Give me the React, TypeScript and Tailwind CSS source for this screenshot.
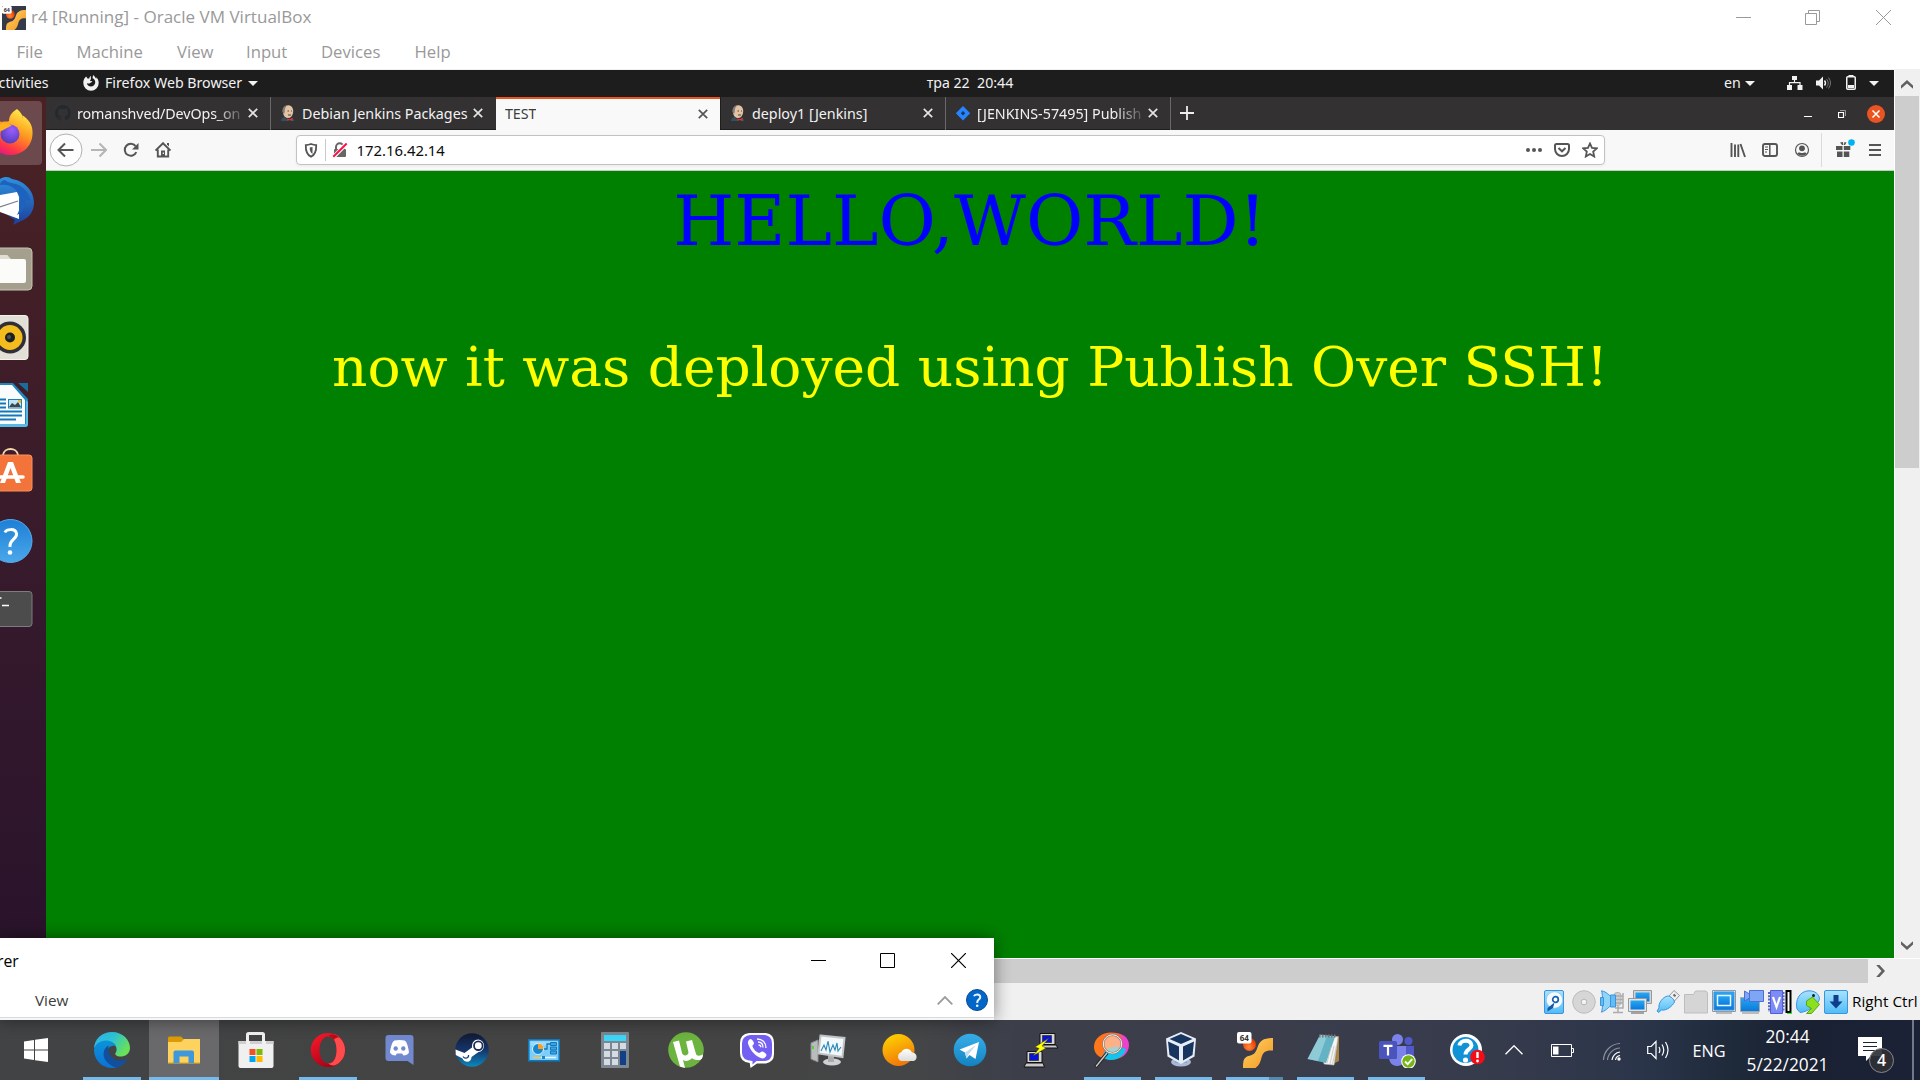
import type { ReactNode } from "react";

const WIN = "font-['Open_Sans',sans-serif]";
const UBU = "font-['Noto_Sans',sans-serif]";

function Icon({ w, h, className = "", children }: { w: number; h: number; className?: string; children: ReactNode }) {
  return (
    <svg width={w} height={h} viewBox={`0 0 ${w} ${h}`} fill="none" className={`block shrink-0 ${className}`}>
      {children}
    </svg>
  );
}

function Machine64({ size }: { size: number }) {
  return (
    <svg width={size} height={size} viewBox="0 0 36 36" className="block shrink-0">
      <defs>
        <linearGradient id="m64" x1="0" y1="0" x2="1" y2="1">
          <stop offset="0" stopColor="#ffd56a" />
          <stop offset="1" stopColor="#f4941c" />
        </linearGradient>
        <radialGradient id="m64b" cx=".45" cy=".7" r=".6">
          <stop offset="0" stopColor="#ff8a3a" />
          <stop offset="1" stopColor="#e93a00" />
        </radialGradient>
      </defs>
      <circle cx="12.500" cy="12.500" r="6.500" fill="url(#m64b)" />
      <path d="M36 6v12.500c-8-.5-10 2-11.500 7-1 4-2 7.500-6 10.500H6c0-8 1-10.500 5.500-12 6-1 7.500-4 9.500-10 2-5 5-8 15-8z" fill="url(#m64)" />
      <rect x="0" y="0" width="14.500" height="11.500" rx="2" fill="#fff" />
      <text x="7.300" y="8.800" textAnchor="middle" fontSize="8" fontWeight="700" fill="#333" fontFamily="Noto Sans">64</text>
    </svg>
  );
}

/* ---------- VirtualBox window frame ---------- */

function VmTitleBar() {
  return (
    <div className="flex h-[35px] items-center bg-white">
      <div className="ml-[2px] flex h-6 w-6 items-center justify-center bg-[#343a47]">
        <Machine64 size={24} />
      </div>
      <span className={`${WIN} mt-[-1px] ml-[5px] text-[17.050px] leading-none text-[#999]`}>r4 [Running] - Oracle VM VirtualBox</span>
      <div className="ml-auto flex items-center">
        <Icon w={15} h={15} className="mr-[54px]"><path d="M0 7.500h15" stroke="#999" /></Icon>
        <Icon w={15} h={15} className="mr-[56px]"><path d="M.5 3.500h11v11H.5zM3.500 3.500v-3h11v11h-3" stroke="#999" /></Icon>
        <Icon w={15} h={15} className="mr-[29px]"><path d="M0 0l15 15M15 0L0 15" stroke="#999" /></Icon>
      </div>
    </div>
  );
}

function VmMenu() {
  return (
    <div className={`${WIN} flex h-[34px] items-center bg-white pl-[16.500px] text-[16.700px] leading-none text-[#999]`}>
      <span className="w-[60px]">File</span>
      <span className="w-[100.500px]">Machine</span>
      <span className="w-[69px]">View</span>
      <span className="w-[75px]">Input</span>
      <span className="w-[93.500px]">Devices</span>
      <span>Help</span>
    </div>
  );
}

/* ---------- GNOME panel ---------- */

const Caret = ({ className = "" }) => (
  <Icon w={10} h={5} className={className}><path d="M0 0h10L5 5z" fill="#f2f2f2" /></Icon>
);

function GnomePanel() {
  return (
    <div className={`${UBU} flex h-[27px] items-center bg-[#1d1d1d] text-[14.200px] leading-none text-[#f2f2f2]`}>
      <div className="flex w-[620px] items-center">
        <span className="ml-[-10.500px] w-[93.500px]">Activities</span>
        <Icon w={16} h={16} className="-mt-px">
          <path d="M8 .8C6.800 1.600 6.300 2.600 6.400 3.600L4.500 3.400 3.200 1.600C1.300 3.200.3 5.200.3 8a7.700 7.700 0 0 0 15.400 0c0-2.500-1-4.700-2.600-5.800l.3 1.800C12.300 2 11 1.200 10.800 0 9.800.7 9.400 2 9.700 3.200c1.900.9 2.800 2.700 2.500 4.600-.4 2.300-2 3.800-4.200 3.800-2.300 0-4-1.600-4.100-3.600 1 .8 2.200.8 3.300 0 1-.8 1.700-.8 2.200-1.300-.3-.6-1.200-.8-2.200-.6C7 5.200 7 4.700 8 4.200 8 3 7.700 2 8 .8z" fill="#f2f2f2" />
        </Icon>
        <span className="ml-[6px]">Firefox Web Browser</span>
        <Caret className="ml-[6px]" />
      </div>
      <div className="w-[700px] text-center whitespace-pre">тра 22  20:44</div>
      <div className="flex flex-1 items-center">
        <span className="ml-[404px]">en</span>
        <Caret className="ml-[4px]" />
        <Icon w={16} h={14} className="ml-[32px] -mt-px">
          <path d="M5 0h5v4H5zM0 9h5v5H0zM10.500 9h5v5h-5z" fill="#f2f2f2" />
          <path d="M7.500 4v3M2.500 9V6.700h10.500V9" stroke="#f2f2f2" strokeWidth="1.200" />
        </Icon>
        <Icon w={16} h={14} className="ml-[13px]">
          <path d="M0 4.500h3L7 .5v13l-4-4H0z" fill="#f2f2f2" />
          <path d="M8.500 4.500q2 2.500 0 5" stroke="#f2f2f2" strokeWidth="1.400" />
          <path d="M10.500 3q3.500 4 0 8.500M12.500 1.500q4 5.500 0 11" stroke="#777" />
        </Icon>
        <Icon w={10} h={15} className="ml-[14px] -mt-[2px]">
          <rect x=".75" y="1.750" width="8.500" height="12.500" rx="1" stroke="#f2f2f2" strokeWidth="1.500" />
          <path d="M2.500 0h5v1.500h-5zM2 10h6v3H2z" fill="#f2f2f2" />
        </Icon>
        <Caret className="ml-[13px]" />
      </div>
    </div>
  );
}

/* ---------- Ubuntu dock ---------- */

function DockItem({ active, children }: { active?: boolean; children: ReactNode }) {
  return (
    <div className={`h-16 w-[42px] ${active ? "rounded-r-[4px] bg-[#6b494c]" : ""}`}>
      <Icon w={42} h={64}>{children}</Icon>
    </div>
  );
}

function Dock() {
  return (
    <div className="flex w-[46px] shrink-0 flex-col gap-1 bg-linear-to-b from-[#4a2223] via-[#35192c] via-60% to-[#29132b] pt-1">
      <DockItem active>
        <defs>
          <linearGradient id="ff" x1=".8" y1="0" x2=".3" y2="1">
            <stop offset="0" stopColor="#fff44f" />
            <stop offset=".45" stopColor="#ff9a1e" />
            <stop offset=".8" stopColor="#ff3647" />
            <stop offset="1" stopColor="#e31587" />
          </linearGradient>
          <radialGradient id="ffb" cx=".6" cy=".3" r=".8">
            <stop offset="0" stopColor="#9a5cff" />
            <stop offset="1" stopColor="#4a3ab0" />
          </radialGradient>
        </defs>
        <path d="M17 8c4 3 6 7 6 10 0-2 0-3-1-4 8 5 11 11 10.500 19C32 46 22 54 10 54 0 54-8 48-12 36c0-8 3-15 8-19l5 4c5-1 7 0 8-1 0-5 3-9 8-12z" fill="url(#ff)" />
        <circle cx="10" cy="33" r="9.500" fill="url(#ffb)" />
        <path d="M0 23c5-2 9-1 12 2-3 0-4 2-7 3-2 1-3 2-5 2z" fill="#ffb01f" />
      </DockItem>
      <DockItem>
        <defs>
          <linearGradient id="tb" x1="0" y1="0" x2="0" y2="1">
            <stop offset="0" stopColor="#2f90dd" />
            <stop offset="1" stopColor="#1c3f9c" />
          </linearGradient>
        </defs>
        <path d="M0 10c5-3 9-2 12 0 12 2 22 11 22 24 0 9-6 16-13 18l-8 4 2-5-15-10z" fill="url(#tb)" />
        <path d="M0 26l17-3 2 5v22L0 43z" fill="#fff" />
        <path d="M0 38l18-6" stroke="#7a7f88" strokeWidth="1.200" />
        <path d="M5 11c-3 0-5 3-5 5 10-1 16 3 20 12 1 7 0 12-3 18 6-3 9-9 9-15 2 0 3 1 4 2 1-5-4-15-14-18-4-1-8-1-11-4z" fill="#1d62bd" />
      </DockItem>
      <DockItem>
        <rect x="-10" y="11" width="42" height="42" rx="4" fill="#a59f8d" stroke="#c6c2b4" />
        <path d="M-5 18H7l3 4h14q2 0 2 2v20q0 2-2 2H-5z" fill="#fbfbf9" />
        <path d="M0 18h7l4 4H0z" fill="#e0ddd2" />
      </DockItem>
      <DockItem>
        <rect x="-14" y="10.500" width="42" height="44" rx="3" fill="#e2dfd7" stroke="#f4f2ec" />
        <circle cx="10" cy="32.500" r="16" fill="#2f2e39" />
        <circle cx="10" cy="32.500" r="12.500" fill="#f3bd1d" />
        <circle cx="10" cy="32.500" r="5" fill="#1d2022" />
        <circle cx="9" cy="32" r="2" fill="#4b5257" />
      </DockItem>
      <DockItem>
        <path d="M0 10h13l15 16v25q0 3-3 3H0z" fill="#1d86bd" />
        <path d="M0 12h12l13 15v24H0z" fill="#fbfcfd" />
        <path d="M0 54v-3h26V27l2 2v22q0 3-3 3z" fill="#56b9e6" />
        <path d="M18 10h10v9z" fill="#1b6c9c" />
        <path d="M0 26.500h6M0 30.500h6M0 34.500h6M0 38.500h22M0 42.500h22M0 46.500h16" stroke="#1478b8" strokeWidth="1.800" />
        <rect x="8.500" y="26.500" width="13" height="8.500" fill="#bfe6f7" stroke="#1d80ba" />
        <path d="M9 34l3-4 3 2 3-3 3 5z" fill="#444" />
        <path d="M18 27h3v3q-3 0-3-3z" fill="#f4b80e" />
      </DockItem>
      <DockItem>
        <path d="M3 14c1-8 14-8 15 0" stroke="#f5d7ae" strokeWidth="1.800" />
        <rect x="-10" y="14" width="42" height="36" rx="3" fill="#f3743a" stroke="#f9915d" />
        <path d="M8 21h5l8 21h-5L10.500 27 5 42H0z" fill="#fff" />
        <path d="M0 36h23" stroke="#fff" strokeWidth="3.500" strokeLinecap="round" />
      </DockItem>
      <DockItem>
        <defs>
          <linearGradient id="hp" x1="0" y1="0" x2="0" y2="1">
            <stop offset="0" stopColor="#1d7fd6" />
            <stop offset="1" stopColor="#4aa8ea" />
          </linearGradient>
        </defs>
        <circle cx="10.500" cy="32" r="21.500" fill="url(#hp)" stroke="#56acec" />
        <path d="M5 23.500c1-3 10-5 11.500 1 1 5-6.500 6-6.500 12v1.500" stroke="#fff" strokeWidth="3" />
        <circle cx="10" cy="43.500" r="2.300" fill="#fff" />
      </DockItem>
      <DockItem>
        <rect x="-10" y="14.500" width="42" height="35" rx="3" fill="#4c4c4c" stroke="#7d7d7d" />
        <path d="M2 28.500h7M0 21h1.500" stroke="#fff" strokeWidth="1.500" />
      </DockItem>
    </div>
  );
}

/* ---------- Firefox ---------- */

const TabClose = ({ dark = false }) => (
  <Icon w={10} h={10} className={dark ? "text-[#555]" : "text-[#e4e4e4]"}>
    <path d="M.8.8l8.400 8.400M9.200.8L.8 9.200" stroke="currentColor" strokeWidth="1.700" />
  </Icon>
);

const Jenkins = () => (
  <Icon w={16} h={16}>
    <path d="M3 8C2 3 5 0 8.500.2 12 .5 14 4 13 8c-.5 3-2.500 5-5 5S3.500 11 3 8z" fill="#e3c3a4" />
    <path d="M3 8C1.500 4 4 .5 7.500.3 5.500 2 4.500 4 4.800 7L4 9z" fill="#837c78" />
    <path d="M1 16c0-2.500 2-4 4-4l3 3v1zM12.500 12.500l2 3.500H10z" fill="#335061" />
    <path d="M7 13.300l2.500 1 3-1.600v3l-3-.7-2 1z" fill="#d33833" />
    <path d="M7.500 6h1.500M11 6h1M8 10h3" stroke="#55423a" />
  </Icon>
);

function Tab({ icon, label, fade, active, sep, labelClass }: { icon?: ReactNode; label: string; fade?: boolean; active?: boolean; sep?: boolean; labelClass?: string }) {
  return (
    <div
      className={`flex h-[33px] shrink-0 items-center ${
        active ? "w-[224px] border-t-2 border-[#e95420] bg-[#f9f9f9] pb-[2px] pl-[9px] text-[#3d3d3d]" : "w-[225px] border-b border-[#1f1e1f] pl-[9px] text-[#f2f2f2]"
      }`}
    >
      {icon && <div className="mr-[6px] shrink-0">{icon}</div>}
      <span
        className={`min-w-0 overflow-hidden whitespace-nowrap ${labelClass ?? "tracking-[-0.120px]"} ${
          fade ? "w-[164px] mask-r-from-84% mask-r-to-104%" : ""
        } pt-[6px] pb-1`}
      >
        {label}
      </span>
      <div className={`ml-auto ${active || sep ? "mr-[12px]" : "mr-[13px]"}`}><TabClose dark={active} /></div>
      {sep && <div className="h-[33px] w-px bg-[#6a696a]" />}
    </div>
  );
}

function TabStrip() {
  return (
    <div className={`${UBU} flex h-[33px] items-center bg-[#333132] text-[14.300px] leading-none`}>
      <Tab
        label="romanshved/DevOps_on"
        fade
        sep
        icon={
          <Icon w={16} h={16}>
            <path d="M8 0a8 8 0 0 0-2.500 15.600c.4.100.5-.2.500-.4v-1.500c-2.200.5-2.700-1-2.700-1-.4-.9-.9-1.200-.9-1.200-.7-.5.1-.5.1-.5.800.1 1.200.8 1.200.8.7 1.200 1.900.9 2.300.7.1-.5.300-.9.500-1.100-1.800-.2-3.600-.9-3.600-4 0-.9.300-1.600.8-2.100-.1-.2-.4-1 .1-2.100 0 0 .7-.2 2.200.8a7.500 7.500 0 0 1 4 0c1.500-1 2.200-.8 2.200-.8.4 1.100.2 1.900.1 2.100.5.6.8 1.300.8 2.100 0 3.100-1.900 3.700-3.700 3.900.3.300.600.8.600 1.500v2.200c0 .2.100.5.500.4A8 8 0 0 0 8 0z" fill="#24292e" />
          </Icon>
        }
      />
      <Tab label="Debian Jenkins Packages" labelClass="tracking-[-0.020px]" icon={<Jenkins />} />
      <Tab label="TEST" active />
      <div className="h-full w-px bg-[#1f1e1f]" />
      <Tab label="deploy1 [Jenkins]" labelClass="" sep icon={<Jenkins />} />
      <Tab
        label="[JENKINS-57495] Publish"
        labelClass=""
        fade
        sep
        icon={
          <Icon w={16} h={16}>
            <path d="M8 1l7.200 7.200L8 15.400.8 8.200z" fill="#2684ff" />
            <path d="M8 6l2.200 2.200L8 10.400 5.800 8.200z" fill="#1d3557" />
          </Icon>
        }
      />
      <Icon w={14} h={14} className="-mt-px ml-[9px]"><path d="M7 0v14M0 7h14" stroke="#eee" strokeWidth="1.800" /></Icon>
      <div className="ml-auto flex items-center pr-[9px]">
        <Icon w={8} h={8} className="mr-[26px]"><path d="M0 6.500h8" stroke="#fff" /></Icon>
        <Icon w={8} h={8} className="mr-[21px]">
          <path d="M.5 2.500h5v5h-5z" stroke="#fff" strokeWidth="1.200" />
          <path d="M2 .5h5.500V6" stroke="#999" />
        </Icon>
        <Icon w={18} h={18}>
          <circle cx="9" cy="9" r="9" fill="#e95420" />
          <path d="M5.500 5.500l7 7m0-7l-7 7" stroke="#fff" strokeWidth="1.500" />
        </Icon>
      </div>
    </div>
  );
}

function Toolbar() {
  return (
    <div className="flex h-[41px] items-center border-b border-[#c8c8c8] bg-[#f8f8f8] text-[#555]">
      <Icon w={34} h={34} className="ml-[3px]">
        <circle cx="17" cy="17" r="16" fill="#fdfdfd" stroke="#b1b1b1" />
        <path d="M24.500 17H10M16 10.500L9.500 17l6.500 6.500" stroke="currentColor" strokeWidth="2" />
      </Icon>
      <Icon w={16} h={16} className="ml-[8px]">
        <path d="M0 8h14.500M8.500 1.500L15 8l-6.500 6.500" stroke="#b5b5b5" strokeWidth="2" />
      </Icon>
      <Icon w={16} h={16} className="ml-[16px]">
        <path d="M13.300 10.200A6 6 0 1 1 12.500 4" stroke="currentColor" strokeWidth="2" />
        <path d="M15.500 1v6.500H9z" fill="currentColor" />
      </Icon>
      <Icon w={16} h={16} className="ml-[16px]">
        <path d="M.5 8.500L8 1.200l7.500 7.300M2.800 7.500v7h10.400v-7" stroke="currentColor" strokeWidth="1.900" />
        <path d="M6 8.500h4V14H6z" fill="currentColor" />
        <path d="M12 1h2v3.500l-2-2z" fill="currentColor" />
        <path d="M8.300 10.500v1.500" stroke="#f8f8f8" strokeWidth="1.200" />
      </Icon>
      <div className="ml-[125px] flex h-[30px] w-[1309px] items-center rounded-[4px] border border-[#c2c2c2] bg-white shadow-[0_1px_3px_rgba(0,0,0,0.06)]">
        <Icon w={14} h={15} className="ml-[7px]">
          <path d="M7 1c2 .8 3.500 1.100 5.200 1.200C12.400 8 11.500 11.500 7 13.800 2.500 11.500 1.600 8 1.800 2.200 3.500 2.100 5 1.800 7 1z" stroke="currentColor" strokeWidth="1.800" />
          <path d="M7 4v7C4.800 9.500 4.200 7.500 4.200 4.500z" fill="currentColor" transform="translate(1.500 0)" />
        </Icon>
        <div className="ml-[7px] h-[22px] w-px bg-[#c9c9c9]" />
        <Icon w={16} h={16} className="ml-[6px]">
          <path d="M4 7V5a3.700 3.700 0 0 1 7.400 0v2" stroke="#666" strokeWidth="2" />
          <rect x="2" y="7" width="12" height="8" rx="1" fill="#666" />
          <path d="M1 15.500L14.500 1.500" stroke="#fff" strokeWidth="4" />
          <path d="M1.300 14.800L14.700 1.500" stroke="#ff0f45" strokeWidth="2" />
        </Icon>
        <span className={`${UBU} ml-[8.500px] pt-px text-[14.850px] leading-none text-[#0c0c0d]`}>172.16.42.14</span>
        <div className="ml-auto flex items-center pr-[6px]">
          <Icon w={16} h={4} className="mr-[12px]">
            <circle cx="2" cy="2" r="2" fill="currentColor" /><circle cx="8" cy="2" r="2" fill="currentColor" /><circle cx="14" cy="2" r="2" fill="currentColor" />
          </Icon>
          <Icon w={16} h={16} className="mr-[12px]">
            <path d="M2.500 2h11q1.500 0 1.500 1.500V7a7 7 0 0 1-14 0V3.500Q1 2 2.500 2z" stroke="currentColor" strokeWidth="2" />
            <path d="M4.500 6L8 9.300 11.500 6" stroke="currentColor" strokeWidth="2" />
          </Icon>
          <Icon w={16} h={16}>
            <path d="M8 1.500l2 4.400 4.800.5-3.600 3.200 1 4.900L8 12l-4.200 2.500 1-4.900L1.200 6.400 6 5.900z" stroke="currentColor" strokeWidth="1.800" />
          </Icon>
        </div>
      </div>
      <div className="ml-auto flex items-center">
        <Icon w={16} h={16} className="mr-[16px]">
          <path d="M1.500 1v14M5 2.500V15M8.300 2.500V15M10.500 2l4.500 13" stroke="currentColor" strokeWidth="1.900" />
        </Icon>
        <Icon w={16} h={16} className="mr-[16px]">
          <rect x="1" y="2" width="14" height="12" rx="2" stroke="currentColor" strokeWidth="1.900" />
          <path d="M7.800 2v12" stroke="currentColor" strokeWidth="1.500" /><path d="M3 5h3M3 7.500h3M3 10h2" stroke="currentColor" />
        </Icon>
        <Icon w={16} h={16} className="mr-[11px]">
          <circle cx="8" cy="8" r="6.500" stroke="currentColor" strokeWidth="1.200" />
          <circle cx="8" cy="6.300" r="2.900" fill="currentColor" />
          <path d="M3.200 11.500C5 9.500 6 11 8 11s3-1.500 4.800.5C11.500 13 10 13.700 8 13.700s-3.500-.7-4.800-2.200z" fill="currentColor" />
        </Icon>
        <div className="mr-[14px] h-[34px] w-px bg-[#dadada]" />
        <Icon w={19} h={18} className="mr-[14px] -mt-[4px]">
          <path d="M0 7h6.500v4H0zM7.800 7h6.500v4H7.800zM1 12.500h5.500V18H1zM7.800 12.500h5.500V18H7.800zM4 3.500l3-.5.300 3H6zM10.500 3.500l-2-.5-.7 3H9z" fill="currentColor" />
          <circle cx="15.500" cy="3.500" r="3.300" fill="#00b3f4" />
        </Icon>
        <Icon w={12} h={12} className="mr-[13px]"><path d="M0 1h12M0 6h12M0 11h12" stroke="currentColor" strokeWidth="1.900" /></Icon>
      </div>
    </div>
  );
}

function Page() {
  return (
    <div className="flex flex-1 flex-col items-center bg-[#008000] pt-[10px] font-['DejaVu_Serif',serif] whitespace-nowrap">
      <div className="text-[70px] leading-[80px] text-[#00f]">HELLO,WORLD!</div>
      <div className="mt-[74px] text-[55px] leading-[64px] text-[#ff0]">now it was deployed using Publish Over SSH!</div>
    </div>
  );
}

/* ---------- VM scroll bars and status bar ---------- */

function VScroll() {
  return (
    <div className="flex w-[25px] shrink-0 flex-col items-center bg-[#f0f0f0] pr-px">
      <Icon w={12} h={9} className="mt-[10px] mb-[7px]"><path d="M0 5.500L6 0l6 5.500v3.300L6 3.500 0 8.800z" fill="#606060" /></Icon>
      <div className="h-[372px] w-full bg-[#cdcdcd]" />
      <Icon w={12} h={9} className="mt-auto mb-[8px]"><path d="M0 3.500L6 9l6-5.500V.2L6 5.500 0 .2z" fill="#606060" /></Icon>
    </div>
  );
}

const frame = "#3d93dd";

function StatusIcons() {
  return (
    <div className="flex items-center gap-1">
      <Icon w={24} h={24}>
        <defs>
          <linearGradient id="sb" x1="0" y1="0" x2="0" y2="1"><stop offset="0" stopColor="#a8e2ff" /><stop offset="1" stopColor="#4fbdf6" /></linearGradient>
          <linearGradient id="sc" x1="0" y1="0" x2="0" y2="1"><stop offset="0" stopColor="#2aa7f2" /><stop offset="1" stopColor="#0879dd" /></linearGradient>
        </defs>
        <rect x=".5" y=".5" width="19" height="23" rx="1.500" fill="url(#sb)" stroke={frame} />
        <circle cx="10.500" cy="10" r="8.300" fill="#f2faff" stroke="#88bde8" strokeWidth=".7" />
        <circle cx="11.500" cy="9.500" r="2.800" fill="#fff" stroke="#1c5fae" strokeWidth="1.700" />
        <path d="M10.500 12.500l-1.500 5.500-5.500 3.500v-3.500z" fill="#1559a8" />
      </Icon>
      <Icon w={24} h={24}>
        <circle cx="12" cy="12" r="11.300" fill="#d6d6d6" stroke="#bcbcbc" />
        <circle cx="12" cy="12" r="2.800" fill="#f4f4f4" stroke="#b5b5b5" />
      </Icon>
      <Icon w={24} h={24}>
        <rect x="14" y="2.500" width="7" height="13" rx="3" fill="#cfcfcf" stroke="#b4b4b4" />
        <path d="M15 6h8M15 9.500h8M15 13h8M18 16v6M13 22.500h10M23 3v15h-8" stroke="#ababab" strokeWidth="1.500" />
        <path d="M1.500.8C7 2 8.500 5 10.500 6v10c-2 1-3.500 4-9 6.200C3 18 3 5 1.500.8z" fill="#8fd5f8" stroke={frame} />
        <path d="M10.500 5h5v12h-5zM.5 7.500h3v8h-3z" fill="#62bdf2" stroke={frame} />
      </Icon>
      <Icon w={24} h={24}>
        <path d="M5.500.5h18v13h-18z" fill="#d4d4d4" stroke="#999" /><path d="M7.500 2.500h14v9h-14z" fill="url(#sc)" />
        <path d="M.5 8.500h18v13H.5z" fill="#e4e4e4" stroke="#999" /><path d="M2.500 10.500h14v9h-14z" fill="url(#sc)" /><path d="M3 23h13" stroke="#888" strokeWidth="1.500" />
      </Icon>
      <Icon w={24} h={24}>
        <path d="M13 6l5-5.500 5.500 5-5 5.500z" fill="#eee" stroke="#999" /><path d="M17.500 4.500l2 1.800" stroke="#666" strokeWidth="2" />
        <path d="M11.500 6c3 0 6.500 3 7 6-2 4-8 9-13 8l-3 2.500L1 21l2-3C2 13 7 7 11.500 6z" fill="url(#sb)" stroke={frame} />
      </Icon>
      <Icon w={24} h={24}>
        <path d="M.5 4.500h9l2-3.500h10.500l1.500 2v20H.5z" fill="#d5d5d5" stroke="#bdbdbd" />
      </Icon>
      <Icon w={24} h={24}>
        <path d="M.5.5h23v21H.5z" fill="#e6e6e6" stroke="#8b9aa8" /><path d="M2 2h20v18H2z" fill="url(#sc)" stroke={frame} /><path d="M5.500 5.500h13v10h-13z" fill="url(#sc)" stroke="#e8f7ff" strokeWidth="1.500" /><path d="M4 23h16" stroke="#aaa" strokeWidth="1.500" />
      </Icon>
      <Icon w={24} h={24}>
        <path d="M.5 7.500h19v14H.5z" fill="url(#sc)" stroke="#aaa" /><path d="M2 23h17" stroke="#aaa" strokeWidth="1.500" />
        <path d="M9.500.5h14v11h-14zM9.500 4l-5-3v10l5-3z" fill="#7fa5f5" stroke="#4b6fd6" />
      </Icon>
      <Icon w={24} h={24}>
        <path d="M1 2v20M15.500 2v20" stroke="#5b66c8" strokeWidth="2" strokeDasharray="2 1.300" />
        <path d="M2.500.5h12v23h-12z" fill="#7d8cf5" stroke="#4f5fd0" />
        <path d="M5 7l3.500 10L12 7" stroke="#fff" strokeWidth="2.200" />
        <path d="M18.500 1h4v21h-4z" fill="#fff" stroke="#000" strokeWidth="2" /><path d="M19 23.500h5V21" stroke="#1bff1b" />
      </Icon>
      <Icon w={24} h={24}>
        <path d="M1 19C-1 11 3 1 13 .8c6 0 10 3 10.500 8C23 14 12 22 4 22.500z" fill="url(#sb)" stroke={frame} />
        <circle cx="17.500" cy="5.500" r="1.500" fill="#123" />
        <path d="M10.500 11l6-4 7 7.500-8 9h-5l5-5-5-3z" fill="#8be01f" stroke="#5aa70f" />
      </Icon>
      <Icon w={24} h={24}>
        <rect x=".5" y=".5" width="23" height="23" rx="1.500" fill="url(#sb)" stroke={frame} />
        <path d="M9.500 5h5v6.500h4L12 18.500 5.500 11.500h4z" fill="#0f3e8c" />
      </Icon>
    </div>
  );
}

/* ---------- Explorer window ---------- */

function ExplorerWindow() {
  return (
    <div className={`${WIN} absolute bottom-[60px] left-0 flex h-[82px] w-[994px] flex-col bg-white shadow-[0_0_16px_rgba(0,0,0,0.45)]`}>
      <div className="flex h-[45px] items-center leading-none">
        <span className="ml-[-3px] pt-[3px] text-[15.800px] text-black">rer</span>
        <div className="ml-auto flex items-center">
          <Icon w={15} h={15} className="mr-[54px]"><path d="M0 7.500h15" stroke="#000" /></Icon>
          <Icon w={15} h={15} className="mr-[56px]"><path d="M.5.5h14v14H.5z" stroke="#000" /></Icon>
          <Icon w={15} h={15} className="mr-[28px]"><path d="M0 0l15 15M15 0L0 15" stroke="#000" strokeWidth="1.200" /></Icon>
        </div>
      </div>
      <div className="flex h-[34px] items-center">
        <span className="mt-[2px] ml-[35px] text-[15.300px] leading-none text-[#3b3b3b]">View</span>
        <div className="ml-auto flex items-center">
          <Icon w={16} h={9} className="mr-[13px]"><path d="M.7 8.300L8 1l7.300 7.300" stroke="#9c9c9c" strokeWidth="1.800" /></Icon>
          <Icon w={22} h={22} className="mr-[6px]">
            <circle cx="11" cy="11" r="10.500" fill="#0067c8" stroke="#0b4d92" />
            <path d="M8 7.300c.8-2.500 6-2.700 6.300.7.2 2.300-3 2.800-3 5v1" stroke="#e8f2fc" strokeWidth="2" />
            <circle cx="11.200" cy="16.800" r="1.300" fill="#e8f2fc" />
          </Icon>
        </div>
      </div>
      <div className="h-px bg-[#d9dadb]" />
      <div className="flex-1 bg-[#f5f6f7]" />
    </div>
  );
}

/* ---------- Windows taskbar ---------- */

function Task({ running, active, stacked, wide, children }: { running?: boolean; active?: boolean; stacked?: boolean; wide?: boolean; children: ReactNode }) {
  return (
    <div className={`flex h-[60px] shrink-0 flex-col items-center ${wide ? "w-[72px]" : "w-[71px]"}`}>
      <div className={`flex h-[57px] items-center justify-center pt-[3px] ${active ? "w-[70px] bg-[#69696b]" : ""}`}>{children}</div>
      {active && <div className="h-[3px] w-[70px] bg-[#76b9ed]" />}
      {running && (
        <div className={`flex h-[3px] bg-[#76b9ed] ${wide ? "w-[58px]" : "w-[57px]"}`}>{stacked && <div className="ml-auto w-[14px] bg-[#5587af]" />}</div>
      )}
    </div>
  );
}

function Taskbar() {
  return (
    <div className={`${WIN} relative flex h-[60px] bg-[linear-gradient(90deg,#424344_0%,#444_40%,#434547_48%,#3c3e4a_53%,#3b3d4a_65%,#363b4c_78%,#2a3449_86%,#1f2a3b_90%,#192133_94%,#1b2236_100%)] text-white`}>
      <div className="flex w-[72px] items-center justify-center">
        <Icon w={24} h={24}><path d="M0 3.400L10 2v9.500H0zM11 1.800L24 0v11.500H11zM0 12.500h10V22L0 20.600zM11 12.500h13V24l-13-1.800z" fill="#fff" /></Icon>
      </div>
      <div className="ml-[4px] flex">
        <Task running wide>
          <Icon w={36} h={36}>
            <defs>
              <linearGradient id="e1" x1="0" y1="0" x2="1" y2=".5"><stop offset="0" stopColor="#2fb3f0" /><stop offset=".5" stopColor="#2cc3d6" /><stop offset="1" stopColor="#68e05a" /></linearGradient>
              <linearGradient id="e2" x1="0" y1="0" x2="0" y2="1"><stop offset="0" stopColor="#0c93d8" /><stop offset="1" stopColor="#0b72d8" /></linearGradient>
            </defs>
            <path d="M0 17C0 7 8 0 18 0c11 0 18 8 18 16 0 6-5 8.500-9.500 8.500-4 0-6-2-5-3.500 3-4 0-11-8.500-11C6 10 1.500 13 0 17z" fill="url(#e1)" />
            <path d="M0 18c1-6 6-9.500 12-9.500 5 0 9 2.500 10 5.500-6-1.500-10 3-8 9 2 7 10 10 17 7C28 33.500 23 36 18 36 8 36 0 28 0 18z" fill="url(#e2)" />
            <path d="M14.500 13.500C8 17 8 26 14 31c4 3.500 8 5 10 4.200 4-1.400 8-5 9.500-8-.5-.5-3 1.500-8 1.300-7-.3-12-6-11-15z" fill="#124f9c" />
          </Icon>
        </Task>
        <Task active wide>
          <Icon w={32} h={28}>
            <path d="M0 2q0-1.500 1.500-1.500H13L15.500 3H32v9H0z" fill="#dc9b05" />
            <path d="M0 6h13l3-3h16v24H0z" fill="#fdd25f" /><path d="M0 26h32v1.500H0z" fill="#f2bc35" />
            <path d="M7.500 14.500H24q2 0 2 2V27h-5.500v-6.500h-9V27H5.500V16.500q0-2 2-2z" fill="#3f97dc" />
          </Icon>
        </Task>
        <Task wide>
          <Icon w={36} h={36}>
            <path d="M9.500 11V2.500q0-1 1-1h14q1 0 1 1V11" stroke="#f1f1f1" strokeWidth="3" />
            <path d="M.5 9h35v25q0 2-2 2h-31q-2 0-2-2z" fill="#f0f0f0" /><path d="M.5 9H8v3H.500zM28 9h7.500v3H28zM12 9h12v3H12z" fill="#cfcfcf" />
            <path d="M11.500 17h6v6h-6z" fill="#f25022" /><path d="M18.500 17h6v6h-6z" fill="#7fba00" /><path d="M11.500 24h6v6h-6z" fill="#00a4ef" /><path d="M18.500 24h6v6h-6z" fill="#ffb900" />
          </Icon>
        </Task>
        <Task running wide>
          <Icon w={36} h={36}>
            <defs><linearGradient id="op" x1="0" y1="0" x2=".6" y2="1"><stop offset="0" stopColor="#ff1b2d" /><stop offset="1" stopColor="#a70014" /></linearGradient></defs>
            <path fillRule="evenodd" d="M18 1a17.300 17 0 1 0 .1 0zM18 4.500c5 0 8.500 6 8.500 13.500S23 31.500 18 31.500 9.500 25.500 9.500 18 13 4.500 18 4.500z" fill="url(#op)" />
            <path d="M18 4.500c4-3.500 9-2.500 12 1.500 7 7 6.500 18 0 24-4 4-8 4.500-12 1.500 6 0 8.500-6 8.500-13.500S24 4.500 18 4.500z" fill="#ff4b4b" />
            <path d="M18 4.500c3-3.500 8-3 12 1.500-3-1-5 0-6 2-2-2.500-4-3.500-6-3.500z" fill="#b80d18" />
          </Icon>
        </Task>
        <Task wide>
          <Icon w={30} h={32}>
            <path d="M3.500 1h22q3 0 3 3v27l-6-4H3.500q-3 0-3-3V4q0-3 3-3z" fill="#7289d0" />
            <path d="M9.500 6.500c3-.8 7-.8 10 0 2 .5 4 6.500 4.500 12-1 2-3 3-5.500 3l-1.500-2h-5l-1.500 2c-2.500 0-4.500-1-5.500-3C5.500 13 7.500 7 9.500 6.500z" fill="#fff" />
            <circle cx="10.700" cy="14.500" r="2.200" fill="#7289d0" /><circle cx="18.300" cy="14.500" r="2.200" fill="#7289d0" />
          </Icon>
        </Task>
        <Task wide>
          <Icon w={34} h={34}>
            <defs><linearGradient id="st" x1="0" y1="0" x2="0" y2="1"><stop offset="0" stopColor="#111a32" /><stop offset=".5" stopColor="#15346a" /><stop offset="1" stopColor="#0b88bd" /></linearGradient></defs>
            <circle cx="17" cy="17" r="16.700" fill="url(#st)" />
            <path d="M.5 16.500l9 3.500L17 14.500c-.2-5 2-8 6.500-8a6.300 6.300 0 0 1 0 12.500l-7 5c0 6-7 6-9 1.500L.8 22z" fill="#fff" />
            <circle cx="23.300" cy="12.700" r="4.300" fill="#fff" stroke="#1c2f57" strokeWidth="1.800" />
            <path d="M8 23.500c2 3 6 1.500 5.500-1.500" stroke="#173c73" strokeWidth="1.200" />
          </Icon>
        </Task>
        <Task wide>
          <Icon w={32} h={24}>
            <rect x=".8" y="1.800" width="30.400" height="21" fill="#7ccdf7" stroke="#1177b8" strokeWidth="1.600" />
            <path d="M2.500 3.500h27v4h-27z" fill="#b5e5fc" opacity=".6" />
            <circle cx="10" cy="11" r="5.500" fill="#1787d2" stroke="#d8f2ff" /><path d="M10 11V5.500a5.500 5.500 0 0 1 5.500 5.500z" fill="#ff9d1e" />
            <path d="M16 11h3V6h3" stroke="#1477bb" strokeWidth="1.300" /><path d="M22.500 4.500h6v3h-6zM22.500 9h6v3h-6zM22.500 13h6v3h-6z" fill="#3aa5e6" stroke="#1477bb" />
            <path d="M5 19.500h8" stroke="#f4c657" strokeWidth="1.500" /><path d="M13 19.500h15" stroke="#e6f7ff" strokeWidth="1.500" /><path d="M14 18h3v3h-3z" fill="#1787d2" />
          </Icon>
        </Task>
        <Task>
          <Icon w={28} h={36} className="-translate-x-px">
            <rect x="0" y="0" width="28" height="36" rx="1" fill="#7c8792" />
            <path d="M3 3h22v6H3z" fill="#3cd6f8" />
            <path d="M3 11h6v6H3zM11 11h6v6h-6zM19 11h6v6h-6zM3 19h6v6H3zM11 19h6v6h-6zM3 27h6v6H3zM11 27h6v6h-6z" fill="#d5dbe3" />
            <path d="M19 19h6v14h-6z" fill="#123f86" />
          </Icon>
        </Task>
        <Task>
          <Icon w={36} h={36} className="-translate-x-px">
            <circle cx="18" cy="18" r="17.800" fill="#6cb33f" />
            <path d="M5 10l6-1.500 3 12.500c1 3.500 6 3 6.500-.5L18 9.500l6-1.500 4 14c.7 2 3 2 6 1l1-1c0 4-1.500 6-4 6-4 0-6-.5-7-2-2 2.500-6 4-9 2l2 8-5-1.500z" fill="#fff" />
          </Icon>
        </Task>
        <Task>
          <Icon w={36} h={36} className="-translate-x-px">
            <path d="M10 1h17q8 1 8 10v11q0 8-8 9.500H18L11.500 36l-.8-5Q1 30 1 21V11Q1 2 10 1z" fill="#fff" />
            <path d="M11 3h15q7 1 7 8.500v9.500q0 7-7 8h-8.500l-4 3.500V29Q3 28.500 3 21v-9.500Q3 4 11 3z" fill="#7360f2" />
            <path d="M11.500 7c1.500 0 3 2.500 3.500 4 .3 1.500-2 2-1.500 3.500 1.500 3.500 3.500 5.500 6.500 6.500 1.500 0 2-2 3.500-1.500s4 2 4 3.500c-.5 2-2.500 3.500-4 3.500C17 25 11 18.500 9 11.500c-.5-2 1-4 2.500-4.500z" fill="#fff" />
            <path d="M18 7c6 0 9 4 9 9M19 10c3.500 0 5 2.500 5 5.500M19.500 12.800c1.500 0 2.300 1 2.300 2.500" stroke="#fff" strokeWidth="1.300" />
          </Icon>
        </Task>
        <Task>
          <Icon w={36} h={32} className="-translate-x-px">
            <path d="M1 9l7-3v22l-7-3z" fill="#b9bcbd" stroke="#8a8c8d" /><path d="M2 12h2v3H2z" fill="#56d338" />
            <ellipse cx="22" cy="28" rx="9" ry="3.500" fill="#cfd1d2" /><path d="M18 20l6 1v7h-6z" fill="#aaadae" />
            <path d="M10.500 1.500l24 2.500-2 19-24-3.500z" fill="#f2f8fb" stroke="#c2c5c6" strokeWidth="2" />
            <path d="M11 17l3-6 2 5 2-9 2 11 3-7 2 5 2-7 1 8 3-4" stroke="#2d87b8" strokeWidth="1.100" />
          </Icon>
        </Task>
        <Task>
          <Icon w={36} h={34}>
            <defs>
              <linearGradient id="wx" x1=".2" y1="0" x2=".6" y2="1"><stop offset="0" stopColor="#ffd400" /><stop offset="1" stopColor="#f0730b" /></linearGradient>
              <linearGradient id="cl" x1="0" y1="0" x2="0" y2="1"><stop offset="0" stopColor="#fff" /><stop offset="1" stopColor="#dcdcdc" /></linearGradient>
            </defs>
            <circle cx="16.500" cy="17" r="16" fill="url(#wx)" />
            <path d="M19 28a4.800 4.800 0 0 1 .5-9c1-3.500 8-5.500 10.500.5 5-.5 6.500 7 1.500 8.500z" fill="url(#cl)" />
          </Icon>
        </Task>
        <Task>
          <Icon w={34} h={34} className="-translate-x-px">
            <defs><linearGradient id="tg" x1="0" y1="0" x2="0" y2="1"><stop offset="0" stopColor="#38aee8" /><stop offset="1" stopColor="#1283c2" /></linearGradient></defs>
            <circle cx="17" cy="17" r="16.300" fill="url(#tg)" />
            <path d="M6.500 16.500L26 9l-3.500 17-6-4-3 3.500-1.500-6z" fill="#fff" /><path d="M12 19.500L23 12l-7.500 9.500-2 4z" fill="#c3dcec" />
          </Icon>
        </Task>
        <Task>
          <Icon w={36} h={36} className="-translate-x-px">
            <path d="M17 1.500h15v11H17z" fill="#d6d6d6" stroke="#111" /><path d="M19.500 3.500h9v7h-9z" fill="#0713d8" stroke="#444" /><path d="M16 13h17l2 3H14z" fill="#c9c9c9" stroke="#111" />
            <path d="M4 19.500h15v11H4z" fill="#d6d6d6" stroke="#111" /><path d="M6.500 21.500h9v7h-9z" fill="#0713d8" stroke="#444" /><path d="M3 31h17l1.500 4H1z" fill="#c9c9c9" stroke="#111" />
            <path d="M26 6L12 15l4 1.500L10 24l13-8-4-2z" fill="#ff0" stroke="#333" strokeWidth=".5" />
          </Icon>
        </Task>
        <Task running>
          <Icon w={36} h={36} className="-translate-x-px">
            <defs><linearGradient id="pal" x1="0" y1="0" x2="1" y2="0"><stop offset="0" stopColor="#ff7a14" /><stop offset=".7" stopColor="#ff6a3a" /><stop offset=".85" stopColor="#ef3fd0" /></linearGradient></defs>
            <path d="M0 15C0 6 8 .5 17 .5c10 0 18 4 18 12.500 0 9-8 14.500-17 14.500C7 27.500 0 23 0 15z" fill="url(#pal)" />
            <path d="M9 23c3-9 14-10 23-6-1 6-8 11-15 11-4 0-7-1-8-5z" fill="#12c5ee" />
            <path d="M13 21L1.500 35" stroke="#222" strokeWidth="3.500" /><path d="M13 21L2 34.500" stroke="#c6c6c6" strokeWidth="1.500" />
            <circle cx="18.500" cy="12" r="9.200" fill="#ffdcc0" fillOpacity=".6" stroke="#8c7a74" strokeWidth="2.200" />
            <circle cx="18.500" cy="12" r="9.200" stroke="#f6f1ec" />
          </Icon>
        </Task>
        <Task running>
          <Icon w={32} h={36} className="-translate-x-[3px]">
            <ellipse cx="16" cy="30" rx="10" ry="4.500" fill="#a8bad6" /><path d="M10 25h12v6H10z" fill="#8fa5c8" />
            <path d="M16 0l15 6.500-1.500 18L16 32 2.500 24.500 1 6.500z" fill="#e6edf6" />
            <path d="M16 2l11.500 5L16 12 4.500 7zM3 9.500l11 5v14L4.500 23zM29 9.500l-11 5v14l9.500-5.500z" fill="#17355e" />
          </Icon>
        </Task>
        <Task running stacked>
          <Machine64 size={36} />
        </Task>
        <Task running>
          <Icon w={34} h={34} className="-translate-x-[2px]">
            <path d="M28 3h4v25l-6 3z" fill="#a88347" />
            <path d="M13 2l18 2-4 28-10-1z" fill="#f5f5f2" stroke="#bbb" strokeWidth=".6" />
            <path d="M13 2l15 2-9 26L.5 26z" fill="#63b3c5" /><path d="M13 2l7 1-9 25L.5 26z" fill="#b5dde5" opacity=".55" />
            <path d="M12 3h18" stroke="#777" strokeWidth="3" strokeDasharray="1.500 1.500" />
            <path d="M24 14l-4 16M27 13l-4 18M29.500 13l-4 18" stroke="#bbb" strokeWidth=".7" />
          </Icon>
        </Task>
        <Task running>
          <Icon w={38} h={36}>
            <circle cx="19.500" cy="7.500" r="5.500" fill="#7b83eb" /><circle cx="30.500" cy="9" r="4" fill="#5059c9" />
            <path d="M26 14h10v9c0 4-3 6-6 6z" fill="#5059c9" /><path d="M11 14h17v11c0 5-4 9-9 9s-8-4-8-9z" fill="#7b83eb" />
            <rect x="1" y="9" width="18" height="18" rx="1.500" fill="#4b53bc" />
            <path d="M5.500 13.800h9M10 14v9.500" stroke="#fff" strokeWidth="2.200" />
            <circle cx="30.500" cy="29.500" r="7.300" fill="#fff" /><circle cx="30.500" cy="29.500" r="6.200" fill="#76b516" />
            <path d="M27 29.500l2.700 2.700 4.500-5" stroke="#fff" strokeWidth="1.900" />
          </Icon>
        </Task>
        <Task>
          <Icon w={36} h={34} className="-translate-x-px">
            <circle cx="17" cy="17" r="16" fill="#fff" /><circle cx="16.500" cy="17" r="13" fill="#0f92d6" />
            <path d="M10.500 12.500c.5-6 12-6.500 12 0 0 4-6 4-6 9" stroke="#fff" strokeWidth="4" /><circle cx="16.500" cy="27" r="2.600" fill="#fff" />
            <circle cx="28.500" cy="24" r="7.300" fill="#f30d17" /><path d="M28.500 19v6" stroke="#fff" strokeWidth="2.400" /><circle cx="28.500" cy="28" r="1.400" fill="#fff" />
          </Icon>
        </Task>
      </div>
      <div className="ml-[2px] flex flex-1 items-center">
        <Icon w={18} h={10}><path d="M.5 9.300L9 .8l8.500 8.500" stroke="#fff" strokeWidth="1.400" /></Icon>
        <Icon w={24} h={14} className="mt-px ml-[28px]">
          <path d="M.5.5h20v12H.500zM21 4.500h1.500v4H21" stroke="#fff" /><path d="M2 2.500h5.500v8H2z" fill="#fff" />
        </Icon>
        <Icon w={20} h={20} className="mt-px ml-[27px]">
          <path d="M1.500 19A17 17 0 0 1 18 2.500M5.500 19A13 13 0 0 1 18 7" stroke="#8990a0" strokeWidth="1.200" />
          <path d="M10 19a9 9 0 0 1 8-8M13.500 19a5.500 5.500 0 0 1 4.500-4.500" stroke="#fff" strokeWidth="1.200" /><circle cx="17" cy="18" r="1.700" fill="#fff" />
        </Icon>
        <Icon w={24} h={20} className="ml-[25px]">
          <path d="M.7 6.500h3.500L9 1.500v17l-4.800-5H.700z" stroke="#fff" strokeWidth="1.200" />
          <path d="M12 7q1.800 3 0 6M15 4.500q3.500 5.500 0 11M18.500 2q5 8 0 16" stroke="#fff" strokeWidth="1.200" />
        </Icon>
        <span className="mt-[2px] ml-[21.500px] w-[53px] text-[16.300px] leading-none">ENG</span>
        <div className="mt-px w-[84px] text-center text-[17.300px] leading-[28px]">
          <div>20:44</div>
          <div>5/22/2021</div>
        </div>
        <Icon w={38} h={38} className="ml-[28px] mt-[9px]">
          <path d="M0 1h24v19H13l-5 5v-5H0z" fill="#fff" />
          <path d="M5 6.500h14M5 10.500h14M5 14.500h14" stroke="#1c2335" strokeWidth="1.200" />
          <circle cx="23.500" cy="24.500" r="12" fill="#2e3034" fillOpacity=".92" stroke="#85878b" />
          <text x="23.500" y="30" textAnchor="middle" fontSize="16" fontWeight="600" fill="#fff" fontFamily="Open Sans">4</text>
        </Icon>
        <div className="mr-[6px] ml-auto h-full w-[2px] bg-[#74798a]" />
      </div>
    </div>
  );
}

export default function App() {
  return (
    <div className="relative flex h-[1080px] w-[1920px] flex-col overflow-hidden bg-white">
      <VmTitleBar />
      <VmMenu />
      <div className="flex h-[889px] border-t border-[#f0f0f0]">
        <div className="flex w-[1894px] flex-col">
          <GnomePanel />
          <div className="flex min-h-0 flex-1">
            <Dock />
            <div className="flex min-w-0 flex-1 flex-col">
              <TabStrip />
              <Toolbar />
              <Page />
            </div>
          </div>
        </div>
        <div className="w-px bg-white" />
        <VScroll />
      </div>
      <div className="flex h-[25px] items-center border-t border-white bg-[#f0f0f0]">
        <div className="h-full w-[1868px] bg-[#cdcdcd]" />
        <Icon w={9} h={12} className="ml-[8px]"><path d="M3.500 0L9 6l-5.500 6H.2l5.300-6L.2 0z" fill="#606060" /></Icon>
      </div>
      <div className="flex h-[37px] items-center justify-end bg-[#f0f0f0]">
        <StatusIcons />
        <span className={`${WIN} mr-[2px] ml-[4px] w-[66px] text-[15.300px] leading-none whitespace-nowrap text-black`}>Right Ctrl</span>
      </div>
      <Taskbar />
      <ExplorerWindow />
    </div>
  );
}
